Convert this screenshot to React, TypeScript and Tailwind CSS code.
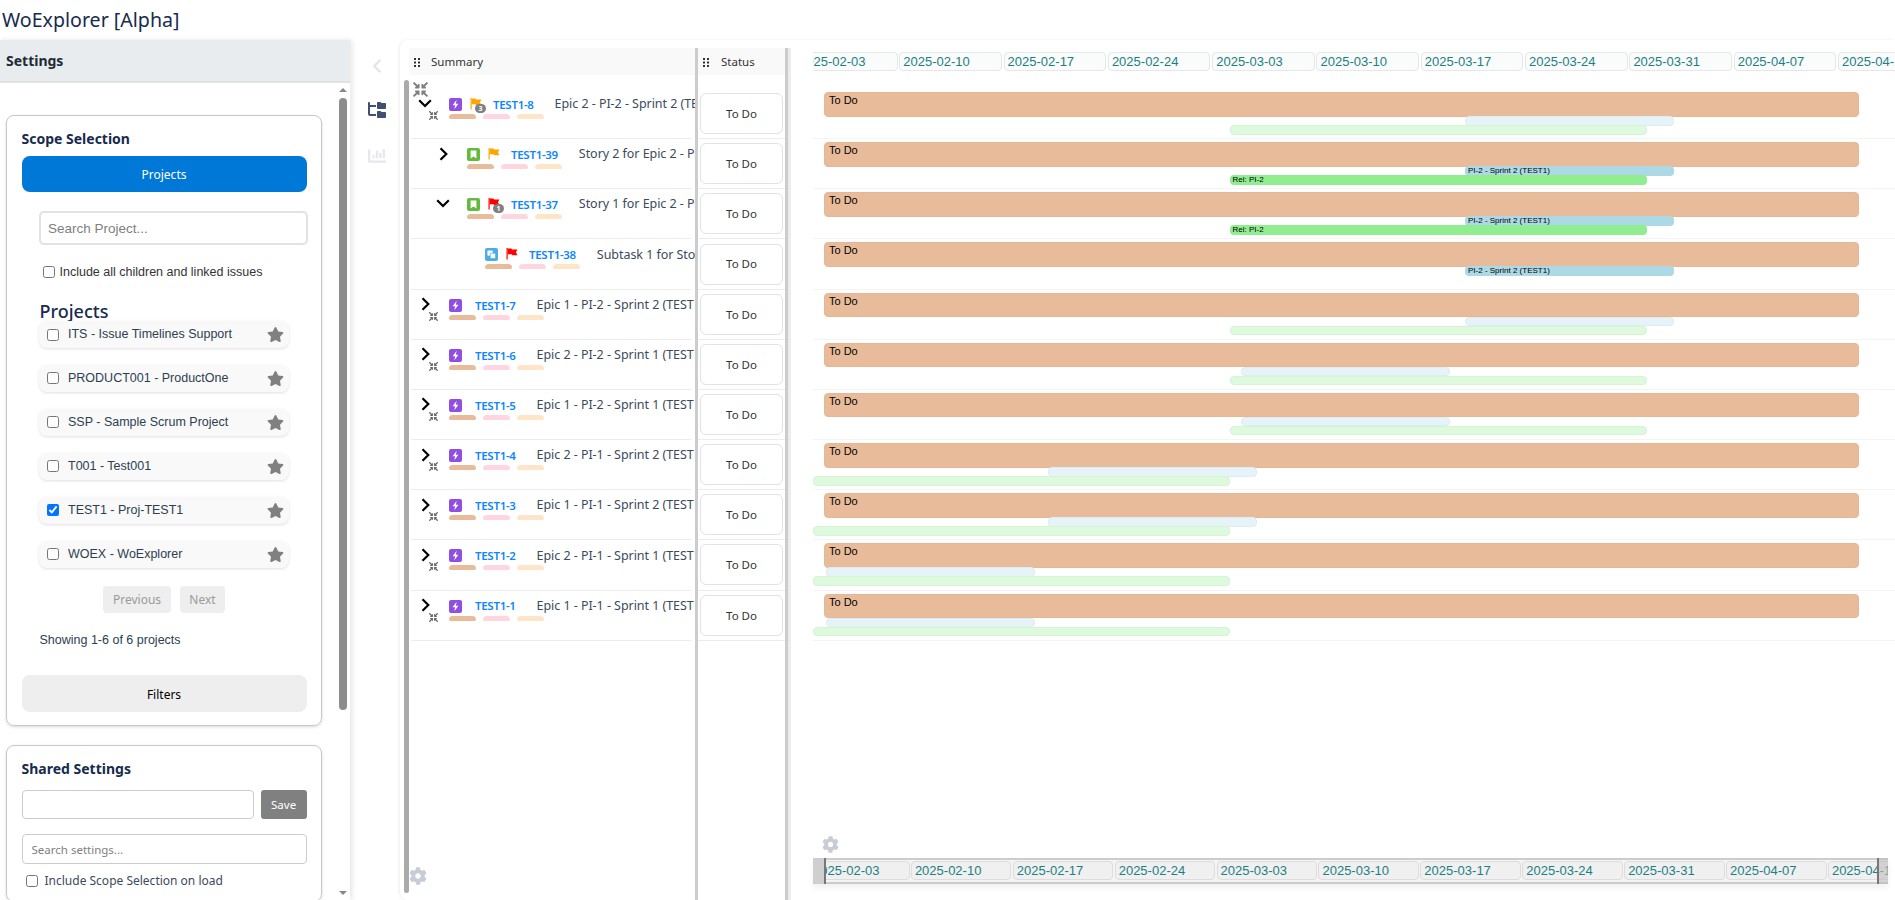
import { ChevronLeft } from 'lucide-react'
import { FaChartBar, FaCog, FaCompressArrowsAlt, FaStar } from 'react-icons/fa'
import { FaFolderTree } from 'react-icons/fa6'

const ui = "font-['Noto_Sans',sans-serif]"
const arial = "font-['Liberation_Sans',sans-serif]"

const projects = [
    { label: 'ITS - Issue Timelines Support', checked: false },
    { label: 'PRODUCT001 - ProductOne', checked: false },
    { label: 'SSP - Sample Scrum Project', checked: false },
    { label: 'T001 - Test001', checked: false },
    { label: 'TEST1 - Proj-TEST1', checked: true },
    { label: 'WOEX - WoExplorer', checked: false },
]

type Row = {
    id: string
    title: string
    level: 0 | 1 | 2
    type: 'epic' | 'story' | 'subtask'
    chevron?: 'down' | 'right'
    mini?: boolean
    flag?: string
    badge?: number
    sprint: { left: number; faded: boolean; label?: string }
    rel?: { left: number; faded: boolean; label?: string }
}

const rows: Row[] = [
    { id: 'TEST1-8', title: 'Epic 2 - PI-2 - Sprint 2 (TEST1)', level: 0, type: 'epic', chevron: 'down', mini: true, flag: '#ffa500', badge: 3, sprint: { left: 652, faded: true }, rel: { left: 416.5, faded: true } },
    { id: 'TEST1-39', title: 'Story 2 for Epic 2 - PI-2 - Sprint 2', level: 1, type: 'story', chevron: 'right', flag: '#ffa500', sprint: { left: 652, faded: false, label: 'PI-2 - Sprint 2 (TEST1)' }, rel: { left: 416.5, faded: false, label: 'Rel: PI-2' } },
    { id: 'TEST1-37', title: 'Story 1 for Epic 2 - PI-2 - Sprint 2', level: 1, type: 'story', chevron: 'down', flag: '#ff0000', badge: 1, sprint: { left: 652, faded: false, label: 'PI-2 - Sprint 2 (TEST1)' }, rel: { left: 416.5, faded: false, label: 'Rel: PI-2' } },
    { id: 'TEST1-38', title: 'Subtask 1 for Story 1 for Epic 2', level: 2, type: 'subtask', flag: '#ff0000', sprint: { left: 652, faded: false, label: 'PI-2 - Sprint 2 (TEST1)' } },
    { id: 'TEST1-7', title: 'Epic 1 - PI-2 - Sprint 2 (TEST1)', level: 0, type: 'epic', chevron: 'right', mini: true, sprint: { left: 652, faded: true }, rel: { left: 416.5, faded: true } },
    { id: 'TEST1-6', title: 'Epic 2 - PI-2 - Sprint 1 (TEST1)', level: 0, type: 'epic', chevron: 'right', mini: true, sprint: { left: 428, faded: true }, rel: { left: 416.5, faded: true } },
    { id: 'TEST1-5', title: 'Epic 1 - PI-2 - Sprint 1 (TEST1)', level: 0, type: 'epic', chevron: 'right', mini: true, sprint: { left: 428, faded: true }, rel: { left: 416.5, faded: true } },
    { id: 'TEST1-4', title: 'Epic 2 - PI-1 - Sprint 2 (TEST1)', level: 0, type: 'epic', chevron: 'right', mini: true, sprint: { left: 235, faded: true }, rel: { left: 0, faded: true } },
    { id: 'TEST1-3', title: 'Epic 1 - PI-1 - Sprint 2 (TEST1)', level: 0, type: 'epic', chevron: 'right', mini: true, sprint: { left: 235, faded: true }, rel: { left: 0, faded: true } },
    { id: 'TEST1-2', title: 'Epic 2 - PI-1 - Sprint 1 (TEST1)', level: 0, type: 'epic', chevron: 'right', mini: true, sprint: { left: 13, faded: true }, rel: { left: 0, faded: true } },
    { id: 'TEST1-1', title: 'Epic 1 - PI-1 - Sprint 1 (TEST1)', level: 0, type: 'epic', chevron: 'right', mini: true, sprint: { left: 13, faded: true }, rel: { left: 0, faded: true } },
]

const dates = ['2025-02-03', '2025-02-10', '2025-02-17', '2025-02-24', '2025-03-03', '2025-03-10', '2025-03-17', '2025-03-24', '2025-03-31', '2025-04-07', '2025-04-14']

const levelPad = { 0: 'pl-0', 1: 'pl-[18px]', 2: 'pl-[36px]' }

function Grip() {
    return (
        <svg width="7" height="9" viewBox="0 0 7 9" className="shrink-0 text-[#333]" fill="currentColor">
            <rect x="0" y="0" width="2" height="2" />
            <rect x="4" y="0" width="2" height="2" />
            <rect x="0" y="3.5" width="2" height="2" />
            <rect x="4" y="3.5" width="2" height="2" />
            <rect x="0" y="7" width="2" height="2" />
            <rect x="4" y="7" width="2" height="2" />
        </svg>
    )
}

function Chevron({ dir }: { dir: 'down' | 'right' }) {
    if (dir === 'down') {
        return (
            <svg width="14" height="9" viewBox="0 0 14 9" fill="none" stroke="#000" strokeWidth="2.2" className="absolute left-[7px] top-[10px]">
                <path d="M1.2 1.2 7 7 12.8 1.2" />
            </svg>
        )
    }
    return (
        <svg width="9" height="14" viewBox="0 0 9 14" fill="none" stroke="#000" strokeWidth="2.2" className="absolute left-[9.5px] top-[7.5px]">
            <path d="M1.5 1.2 7.3 7 1.5 12.8" />
        </svg>
    )
}

function TypeIcon({ type }: { type: Row['type'] }) {
    if (type === 'epic') {
        return (
            <svg width="13" height="13" viewBox="0 0 13 13" className="shrink-0">
                <rect width="13" height="13" rx="2" fill="#904ee2" />
                <path d="M7.6 1.8 3.6 7.3h2.5L5.4 11.2 9.4 5.7H6.9z" fill="#fff" />
            </svg>
        )
    }
    if (type === 'story') {
        return (
            <svg width="13" height="13" viewBox="0 0 13 13" className="shrink-0">
                <rect width="13" height="13" rx="2" fill="#63ba3c" />
                <path d="M3.6 2.6h5.8v8L6.5 8.6 3.6 10.6z" fill="#fff" />
            </svg>
        )
    }
    return (
        <svg width="13" height="13" viewBox="0 0 13 13" className="shrink-0">
            <rect width="13" height="13" rx="2" fill="#4bade8" />
            <rect x="2.4" y="2.4" width="5.4" height="5.4" rx="1" fill="#fff" />
            <rect x="5.2" y="5.2" width="5.4" height="5.4" rx="1" fill="#fff" stroke="#4bade8" strokeWidth="0.8" />
        </svg>
    )
}

function Flag({ color }: { color: string }) {
    return (
        <svg width="12" height="12" viewBox="0 0 12 12" fill={color} className="block">
            <path d="M0.5 0h1.2v11.5H0.5z" />
            <path d="M1.7 0.6h3.5l1 .9H11.4L10 4.3l1.4 3H6.4l-1-1H1.7z" />
        </svg>
    )
}

function TreeRow({ row }: { row: Row }) {
    return (
        <div className="relative h-[50.17px] ml-[2px] overflow-hidden">
            <div className={`flex h-full ${levelPad[row.level]}`}>
                <div className="relative w-[38px] shrink-0">
                    {row.chevron && <Chevron dir={row.chevron} />}
                    {row.mini && <FaCompressArrowsAlt className="absolute left-[18px] top-[22px] text-[#666]" size={9} />}
                </div>
                <div className="flex flex-col pt-[9px] min-w-0 flex-1">
                    <div className="flex items-center h-[13px]">
                        <TypeIcon type={row.type} />
                        {row.flag ? (
                            <div className="relative w-[31px] h-[13px] shrink-0 pl-[8px]">
                                <Flag color={row.flag} />
                                {row.badge && (
                                    <span className="absolute left-[13px] top-[6px] w-[11px] h-[9px] rounded-full bg-[#808080] text-white text-[7px] leading-[9px] text-center font-bold">
                                        {row.badge}
                                    </span>
                                )}
                            </div>
                        ) : (
                            <div className="w-[13px] shrink-0" />
                        )}
                        <span className={`${ui} shrink-0 text-[11.5px] tracking-[-0.3px] font-semibold text-[#0f85ff] whitespace-nowrap`}>{row.id}</span>
                        <span className={`${ui} ml-[21px] min-w-0 overflow-hidden text-[12.5px] tracking-[-0.05px] text-[#3c4a5e] whitespace-nowrap`}>{row.title}</span>
                    </div>
                    <div className="flex gap-[7px] mt-[3px]">
                        <span className="w-[27px] h-[5px] rounded-t-[5px] rounded-b-[2px] bg-[#e8bc9a]" />
                        <span className="w-[27px] h-[5px] rounded-t-[5px] rounded-b-[2px] bg-[#ffd6e0]" />
                        <span className="w-[27px] h-[5px] rounded-t-[5px] rounded-b-[2px] bg-[#ffe5c8]" />
                    </div>
                </div>
            </div>
            <span className="absolute left-0 right-[4px] bottom-0 h-px bg-[#ececec]" />
        </div>
    )
}

function GanttRow({ row }: { row: Row }) {
    return (
        <div className="relative h-[50.17px] border-b border-[#f4f4f4]">
            <div className={`${arial} absolute left-[11px] top-[3px] w-[1035px] h-[24.5px] rounded-[4px] bg-[#e8bc9a] border border-[#e6b794] pl-[4px] text-[11px] leading-[15px] text-black`}>
                To Do
            </div>
            <div
                className={`${arial} absolute top-[27px] w-[209px] h-[9.5px] rounded-[4px] pl-[3px] text-[8px] leading-[9.5px] text-black whitespace-nowrap overflow-hidden ${row.sprint.faded ? 'bg-[#e6f3f8] border border-[#dcedf4]' : 'bg-[#add8e6]'}`}
                style={{ left: row.sprint.left }}
            >
                {row.sprint.label}
            </div>
            {row.rel && (
                <div
                    className={`${arial} absolute top-[36px] w-[417px] h-[9.5px] rounded-[4px] pl-[3px] text-[8px] leading-[9.5px] text-black whitespace-nowrap overflow-hidden ${row.rel.faded ? 'bg-[#def9de] border border-[#d2f6d2]' : 'bg-[#90ee90]'}`}
                    style={{ left: row.rel.left }}
                >
                    {row.rel.label}
                </div>
            )}
        </div>
    )
}

function Settings() {
    return (
        <aside className="relative z-10 w-[350px] shrink-0 flex flex-col bg-white shadow-[2px_0_5px_rgba(0,0,0,0.1)]">
            <div className={`${ui} h-[43px] shrink-0 flex items-center pl-[6px] bg-[#e9ecef] border-b-2 border-[#dee2e6] text-[14px] font-bold text-[#212b36]`}>
                Settings
            </div>
            <div className="flex flex-1 min-h-0">
                <div className="flex-1 overflow-hidden pl-[6px] pt-[32px]">
                    <div className="w-[316px] rounded-lg border border-[#c8c8c8] px-[14.5px] pt-[13px] pb-[13px] shadow-[0_1px_3px_rgba(0,0,0,0.15)]">
                        <h2 className={`${ui} h-[20px] leading-[20px] text-[14px] font-bold text-[#172b4d]`}>Scope Selection</h2>
                        <button className={`${ui} mt-[7px] w-full h-[36px] rounded-lg bg-[#0078d7] pt-[2px] text-[12px] text-white`}>Projects</button>
                        <input
                            readOnly
                            placeholder="Search Project..."
                            className={`${arial} mt-[19px] ml-[17.5px] block w-[269px] h-[34px] rounded-[5px] border-2 border-[#e2e2e2] px-[7px] text-[13.5px] placeholder:text-[#808080]`}
                        />
                        <label className={`${arial} mt-[20px] ml-[21px] flex items-center gap-[5px] h-[14px] text-[12.5px] text-[#333]`}>
                            <input type="checkbox" readOnly className="w-[12px] h-[12px]" />
                            Include all children and linked issues
                        </label>
                        <h3 className={`${ui} mt-[20px] ml-[18px] h-[24px] leading-[24px] text-[18px] font-medium text-[#172b4d]`}>Projects</h3>
                        <ul className="mt-[-2px] ml-[17.5px] w-[250px] flex flex-col gap-[16.95px]">
                            {projects.map((project) => (
                                <li key={project.label} className="h-[27px] flex items-center rounded-lg bg-[#f9f9f9] pl-[8px] pr-[5px] shadow-[0_1px_3px_rgba(0,0,0,0.12)]">
                                    <input type="checkbox" readOnly checked={project.checked} className="w-[12px] h-[12px] accent-[#0075ff]" />
                                    <span className={`${arial} ml-[9px] flex-1 text-[12.5px] text-[#2c3e50]`}>{project.label}</span>
                                    <FaStar size={17} className="text-[#808080]" />
                                </li>
                            ))}
                        </ul>
                        <div className="mt-[18.5px] ml-[81.5px] flex gap-[9px]">
                            <button className={`${ui} w-[68px] h-[27px] rounded-[4px] bg-[#eeeeee] text-[12px] text-[#9a9a9a]`}>Previous</button>
                            <button className={`${ui} w-[45px] h-[27px] rounded-[4px] bg-[#eeeeee] text-[12px] text-[#9a9a9a]`}>Next</button>
                        </div>
                        <p className={`${arial} mt-[17px] ml-[18px] h-[20px] leading-[20px] text-[12.5px] text-[#2c3e50]`}>Showing 1-6 of 6 projects</p>
                        <button className={`${ui} mt-[25px] w-full h-[37px] rounded-lg bg-[#eeeeee] pt-[2px] text-[12px] text-black`}>Filters</button>
                    </div>
                    <div className="mt-[19px] w-[316px] rounded-lg border border-[#c8c8c8] px-[14.5px] pt-[13px] pb-[13px] shadow-[0_1px_3px_rgba(0,0,0,0.15)]">
                        <h2 className={`${ui} h-[20px] leading-[20px] text-[14px] font-bold text-[#172b4d]`}>Shared Settings</h2>
                        <div className="mt-[11px] flex gap-[7px]">
                            <input readOnly className="w-[233px] h-[29px] rounded-[4px] border border-[#cccccc]" />
                            <button className={`${ui} w-[46px] h-[29px] rounded-[3px] bg-[#808080] text-[11.5px] text-white`}>Save</button>
                        </div>
                        <input
                            readOnly
                            placeholder="Search settings..."
                            className={`${ui} mt-[15px] block w-full h-[30px] rounded-[4px] border border-[#cccccc] px-[9px] text-[11.5px] placeholder:text-[#808080]`}
                        />
                        <label className={`${ui} mt-[10px] ml-[4px] flex items-center gap-[7px] h-[14px] text-[12px] text-[#3c4a5e]`}>
                            <input type="checkbox" readOnly className="w-[12px] h-[12px]" />
                            Include Scope Selection on load
                        </label>
                    </div>
                </div>
                <div className="w-[16px] shrink-0 flex flex-col items-center pl-[2px]">
                    <span className="mt-[5px] w-0 h-0 border-x-[4px] border-x-transparent border-b-[4px] border-b-[#888]" />
                    <span className="mt-[6px] w-[8px] h-[612px] rounded-full bg-[#8c8c8c]" />
                    <span className="mt-auto mb-[5px] w-0 h-0 border-x-[4px] border-x-transparent border-t-[4px] border-t-[#888]" />
                </div>
            </div>
        </aside>
    )
}

function Rail() {
    return (
        <div className="w-[50px] shrink-0 flex flex-col items-center pl-[4px] pt-[15px]">
            <ChevronLeft size={22} strokeWidth={2.5} className="text-[#e1e3e6]" />
            <FaFolderTree size={18} className="mt-[24px] text-[#3f5070]" />
            <FaChartBar size={18} className="mt-[28px] text-[#e6e8eb]" />
        </div>
    )
}

function DateStrip({ mini }: { mini?: boolean }) {
    return (
        <div className="flex overflow-hidden">
            <div className={`flex shrink-0 ${mini ? 'ml-[-4px] gap-[1.4px]' : 'ml-[-18px] gap-[1.8px]'}`}>
                {dates.map((date) => (
                    <span
                        key={date}
                        className={`${arial} block shrink-0 h-[19px] leading-[17px] rounded-[4px] border pl-[3px] text-[13px] text-[#1b7f83] whitespace-nowrap ${mini ? 'w-[100.5px] bg-[#f0f0f0] border-[#dddddd]' : 'w-[102.5px] bg-[#fafbfb] border-[#e4e8e8]'}`}
                    >
                        {date}
                    </span>
                ))}
            </div>
        </div>
    )
}

export default function App() {
    return (
        <div className="h-[900px] overflow-hidden flex flex-col bg-white">
            <h1 className={`${ui} h-[40px] shrink-0 pl-[2px] leading-[40px] text-[19.6px] text-[#172b4d]`}>WoExplorer [Alpha]</h1>
            <div className="flex flex-1 min-h-0">
                <Settings />
                <Rail />
                <div className="relative flex flex-1 min-w-0 rounded-l-lg shadow-[-1px_0_3px_rgba(0,0,0,0.07)] pt-[8px]">
                    {/* summary column */}
                    <div className="relative w-[295px] shrink-0 flex flex-col pl-[9px]">
                        <div className={`${ui} h-[27px] shrink-0 flex items-center gap-[10px] pl-[5px] pt-[1px] bg-[#f9f9f9] text-[11.5px] text-[#333]`}>
                            <Grip />
                            Summary
                        </div>
                        <div className="mt-[14px]">
                            {rows.map((row) => (
                                <TreeRow key={row.id} row={row} />
                            ))}
                        </div>
                        <span className="absolute left-[4px] top-[32px] bottom-[7px] w-[5px] rounded-full bg-[#aaaaaa]" />
                        <FaCompressArrowsAlt size={15} className="absolute left-[13px] top-[34px] text-[#808080]" />
                        <FaCog size={18} className="absolute left-[9px] bottom-[15px] text-[#c8ccd6]" />
                    </div>
                    {/* status column */}
                    <div className="w-[93px] shrink-0 flex flex-col border-x-[3px] border-[#cccccc] ">
                        <div className={`${ui} h-[27px] shrink-0 flex items-center gap-[11px] pl-[5px] pt-[1px] bg-[#f9f9f9] text-[11.5px] text-[#333]`}>
                            <Grip />
                            Status
                        </div>
                        <div className="mt-[14px]">
                            {rows.map((row) => (
                                <div key={row.id} className="h-[50.17px] px-[2px] border-b border-[#ececec] flex items-center">
                                    <button className={`${ui} w-[83px] h-[41px] rounded-[6px] border border-[#e2e2e2] bg-white text-[11.5px] text-[#333]`}>To Do</button>
                                </div>
                            ))}
                        </div>
                    </div>
                    {/* gantt */}
                    <div className="relative flex-1 min-w-0 flex flex-col border-l-[3px] border-[#ececec] pl-[22px] pt-[4px] pb-[16px]">
                        <DateStrip />
                        <div className="mt-[18px]">
                            {rows.map((row) => (
                                <GanttRow key={row.id} row={row} />
                            ))}
                        </div>
                        <FaCog size={17} className="absolute left-[31px] top-[788px] text-[#c8ccd6]" />
                        <div className="relative mt-auto mr-[7px] h-[26px] border-y-2 border-[#cccccc] bg-[#f4f4f4] pt-[1px] shadow-[0_4px_6px_rgba(0,0,0,0.06)]">
                            <DateStrip mini />
                            <span className="absolute left-0 top-[-2px] bottom-[-2px] w-[13px] rounded-l-[3px] bg-[#cfcfcf] border-r-2 border-[#777777]" />
                            <span className="absolute right-0 top-[-2px] bottom-[-2px] w-[11px] bg-[#bdbdbd]/60 border-l-2 border-[#777777]" />
                        </div>
                    </div>
                </div>
            </div>
        </div>
    )
}
